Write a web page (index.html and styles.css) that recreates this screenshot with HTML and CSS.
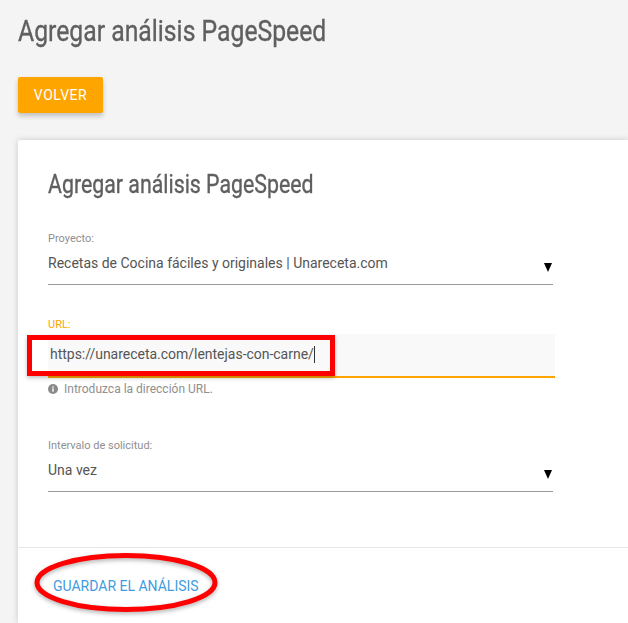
FILE: index.html
```html
<!DOCTYPE html>
<html lang="es">
<head>
<meta charset="utf-8">
<title>Agregar análisis PageSpeed</title>
<link rel="stylesheet" href="styles.css">
</head>
<body>
<main class="page">
  <h1 class="page-title"><span class="cond">Agregar análisis PageSpeed</span></h1>
  <a class="btn-back">VOLVER</a>
  <section class="card">
    <div class="card-body">
      <h2 class="card-title"><span class="cond">Agregar análisis PageSpeed</span></h2>
      <div class="field field-select">
        <label class="label">Proyecto:</label>
        <div class="select"><span>Recetas de Cocina fáciles y originales | Unareceta.com</span><i class="arrow"></i></div>
      </div>
      <div class="field field-url">
        <label class="label label-active">URL:</label>
        <div class="input"><span class="url-text">https://unareceta.com/lentejas-con-carne/</span><span class="caret"></span>
          <span class="mark-rect"></span>
        </div>
        <p class="help">
          <svg class="info" viewBox="0 0 10 10" width="10" height="10"><circle cx="5" cy="5" r="5" fill="#8a8a8a"/><rect x="4.3" y="4.3" width="1.4" height="3.4" fill="#fff"/><rect x="4.3" y="2.3" width="1.4" height="1.3" fill="#fff"/></svg>
          Introduzca la dirección URL.
        </p>
      </div>
      <div class="field field-interval">
        <label class="label">Intervalo de solicitud:</label>
        <div class="select"><span>Una vez</span><i class="arrow"></i></div>
      </div>
    </div>
    <footer class="card-footer">
      <a class="save">GUARDAR EL ANÁLISIS</a>
      <svg class="mark-ellipse" viewBox="0 0 190 68" width="190" height="68"><ellipse cx="92" cy="34.5" rx="89" ry="27" fill="none" stroke="#ff0000" stroke-width="5"/></svg>
    </footer>
  </section>
</main>
</body>
</html>
```
FILE: styles.css
```css
* { box-sizing: border-box; }
html, body { margin: 0; height: 100%; overflow: hidden; }
body { background: #f4f4f4; font-family: Roboto, "Liberation Sans", sans-serif; color: #555; }
.page { padding: 13px 0 0 18px; width: 628px; height: 623px; overflow: hidden; }
.page-title, .card-title { margin: 0; font-weight: 400; color: #5f5f5f; -webkit-text-stroke: .35px #5f5f5f; }
.cond { display: inline-block; transform: scaleX(.825); transform-origin: left center; white-space: nowrap; }
.page-title { font-size: 30px; line-height: 36px; }
.btn-back { display: block; margin-top: 28px; width: 85px; height: 36px; background: #ffa500; color: #fff; font-size: 14px; line-height: 36px; text-align: center; letter-spacing: .5px; border-radius: 2px; box-shadow: 0 3px 5px rgba(0,0,0,.22); }
.card { margin-top: 27px; background: #fff; box-shadow: 0 0 6px rgba(0,0,0,.18); border-radius: 2px 0 0 0; height: 483px; }
.card-body { padding: 28px 0 0 30px; height: 407px; }
.card-title { font-size: 26px; line-height: 32px; }
.card-title .cond { transform: scaleX(.82); }
.field { width: 505px; }
.label { display: block; font-size: 11px; line-height: 14px; color: #8f8f8f; }
.label-active { color: #ffa500; }
.select { position: relative; height: 39px; padding-top: 7px; border-bottom: 1px solid #9a9a9a; font-size: 14px; line-height: 20px; color: #555; }
.arrow { position: absolute; right: 1px; top: 17px; width: 0; height: 0; border-left: 4px solid transparent; border-right: 4px solid transparent; border-top: 9px solid #000; }
.field-select { margin-top: 32px; }
.field-url { margin-top: 33px; }
.field-interval { margin-top: 43px; }
.input { position: relative; width: 507px; height: 44px; margin-top: 2px; padding: 10px 0 0 2px; background: #f9f9f9; border-bottom: 2px solid #ffa500; font-size: 14px; line-height: 20px; color: #555; display: flex; align-items: flex-start; }
.url-text { letter-spacing: -.02px; }
.caret { display: block; width: 1px; height: 17px; margin: 2px 0 0 0; background: #333; }
.mark-rect { position: absolute; left: -21px; top: 1px; width: 308px; height: 41px; border: 5px solid #ff0000; box-shadow: 0 2px 4px rgba(0,0,0,.25); }
.help { display: flex; align-items: center; gap: 6px; margin: 4px 0 0; font-size: 12px; line-height: 14px; color: #8f8f8f; }
.info { flex: none; }
.card-footer { position: relative; border-top: 1px solid #e6e6e6; padding: 30px 0 0 35px; }
.save { font-size: 14px; line-height: 17px; color: #3f9be0; display: block; }
.mark-ellipse { position: absolute; left: 16px; top: 0; filter: drop-shadow(0 2px 2px rgba(0,0,0,.3)); }
```
